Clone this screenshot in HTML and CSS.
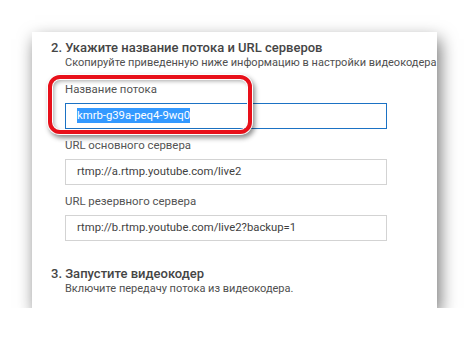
FILE: index.html
```html
<!DOCTYPE html>
<html lang="ru">
<head>
<meta charset="utf-8">
<link rel="stylesheet" href="styles.css">
</head>
<body>
<div class="card">
  <div class="step">
    <h2 class="step-title">2. Укажите название потока и URL серверов</h2>
    <p class="step-desc">Скопируйте приведенную ниже информацию в настройки видеокодера</p>
  </div>
  <div class="fields">
    <div class="field field-highlight">
      <div class="label">Название потока</div>
      <div class="input input-active"><span class="sel">kmrb-g39a-peq4-9wq0</span></div>
      <div class="ring"></div>
    </div>
    <div class="field">
      <div class="label">URL основного сервера</div>
      <div class="input">rtmp://a.rtmp.youtube.com/live2</div>
    </div>
    <div class="field">
      <div class="label">URL резервного сервера</div>
      <div class="input">rtmp://b.rtmp.youtube.com/live2?backup=1</div>
    </div>
  </div>
  <div class="step step-last">
    <h2 class="step-title">3. Запустите видеокодер</h2>
    <p class="step-desc">Включите передачу потока из видеокодера.</p>
  </div>
</div>
</body>
</html>
```

FILE: styles.css
```css
html, body {
  margin: 0;
  padding: 0;
  background: #ffffff;
}
body {
  padding: 32px 0 0 32px;
  font-family: Roboto, "Noto Sans", sans-serif;
}
.card {
  width: 405px;
  height: 276px;
  box-sizing: border-box;
  background: #fff;
  box-shadow: 3px 7px 16px rgba(0, 0, 0, 0.55);
  padding: 8px 0 0 19px;
  overflow: hidden;
  display: flex;
  flex-direction: column;
}
.step-title {
  margin: 0;
  font-size: 13px;
  line-height: 16px;
  font-weight: 500;
  color: #454545;
  white-space: nowrap;
}
.step-desc {
  margin: 0 0 0 14px;
  font-size: 11px;
  line-height: 14px;
  color: #4f4f4f;
  white-space: nowrap;
}
.fields {
  display: flex;
  flex-direction: column;
  margin: 12px 0 0 14px;
  gap: 9px;
}
.field {
  position: relative;
  display: flex;
  flex-direction: column;
  gap: 7px;
}
.label {
  font-size: 11.4px;
  line-height: 14px;
  color: #535353;
}
.input {
  width: 322px;
  height: 26px;
  box-sizing: border-box;
  border: 1px solid #d3d3d3;
  padding: 0 11px;
  font-size: 11.3px;
  line-height: 24px;
  color: #3f3f3f;
  white-space: nowrap;
}
.input-active {
  border-color: #1b72c4;
}
.sel {
  background: #3399ff;
  color: #fff;
  padding: 1px 0;
}
.ring {
  position: absolute;
  left: -17px;
  top: -7px;
  width: 204px;
  height: 59px;
  box-sizing: border-box;
  border: 4px solid #e8101a;
  border-radius: 12px;
  box-shadow: 0 0 0 1px #fff, 2px 3px 5px 1px rgba(0, 0, 0, 0.45), inset 0 0 0 1px #fff, inset 2px 2px 4px rgba(0, 0, 0, 0.35);
}
.step-last {
  margin-top: 25px;
}
```
